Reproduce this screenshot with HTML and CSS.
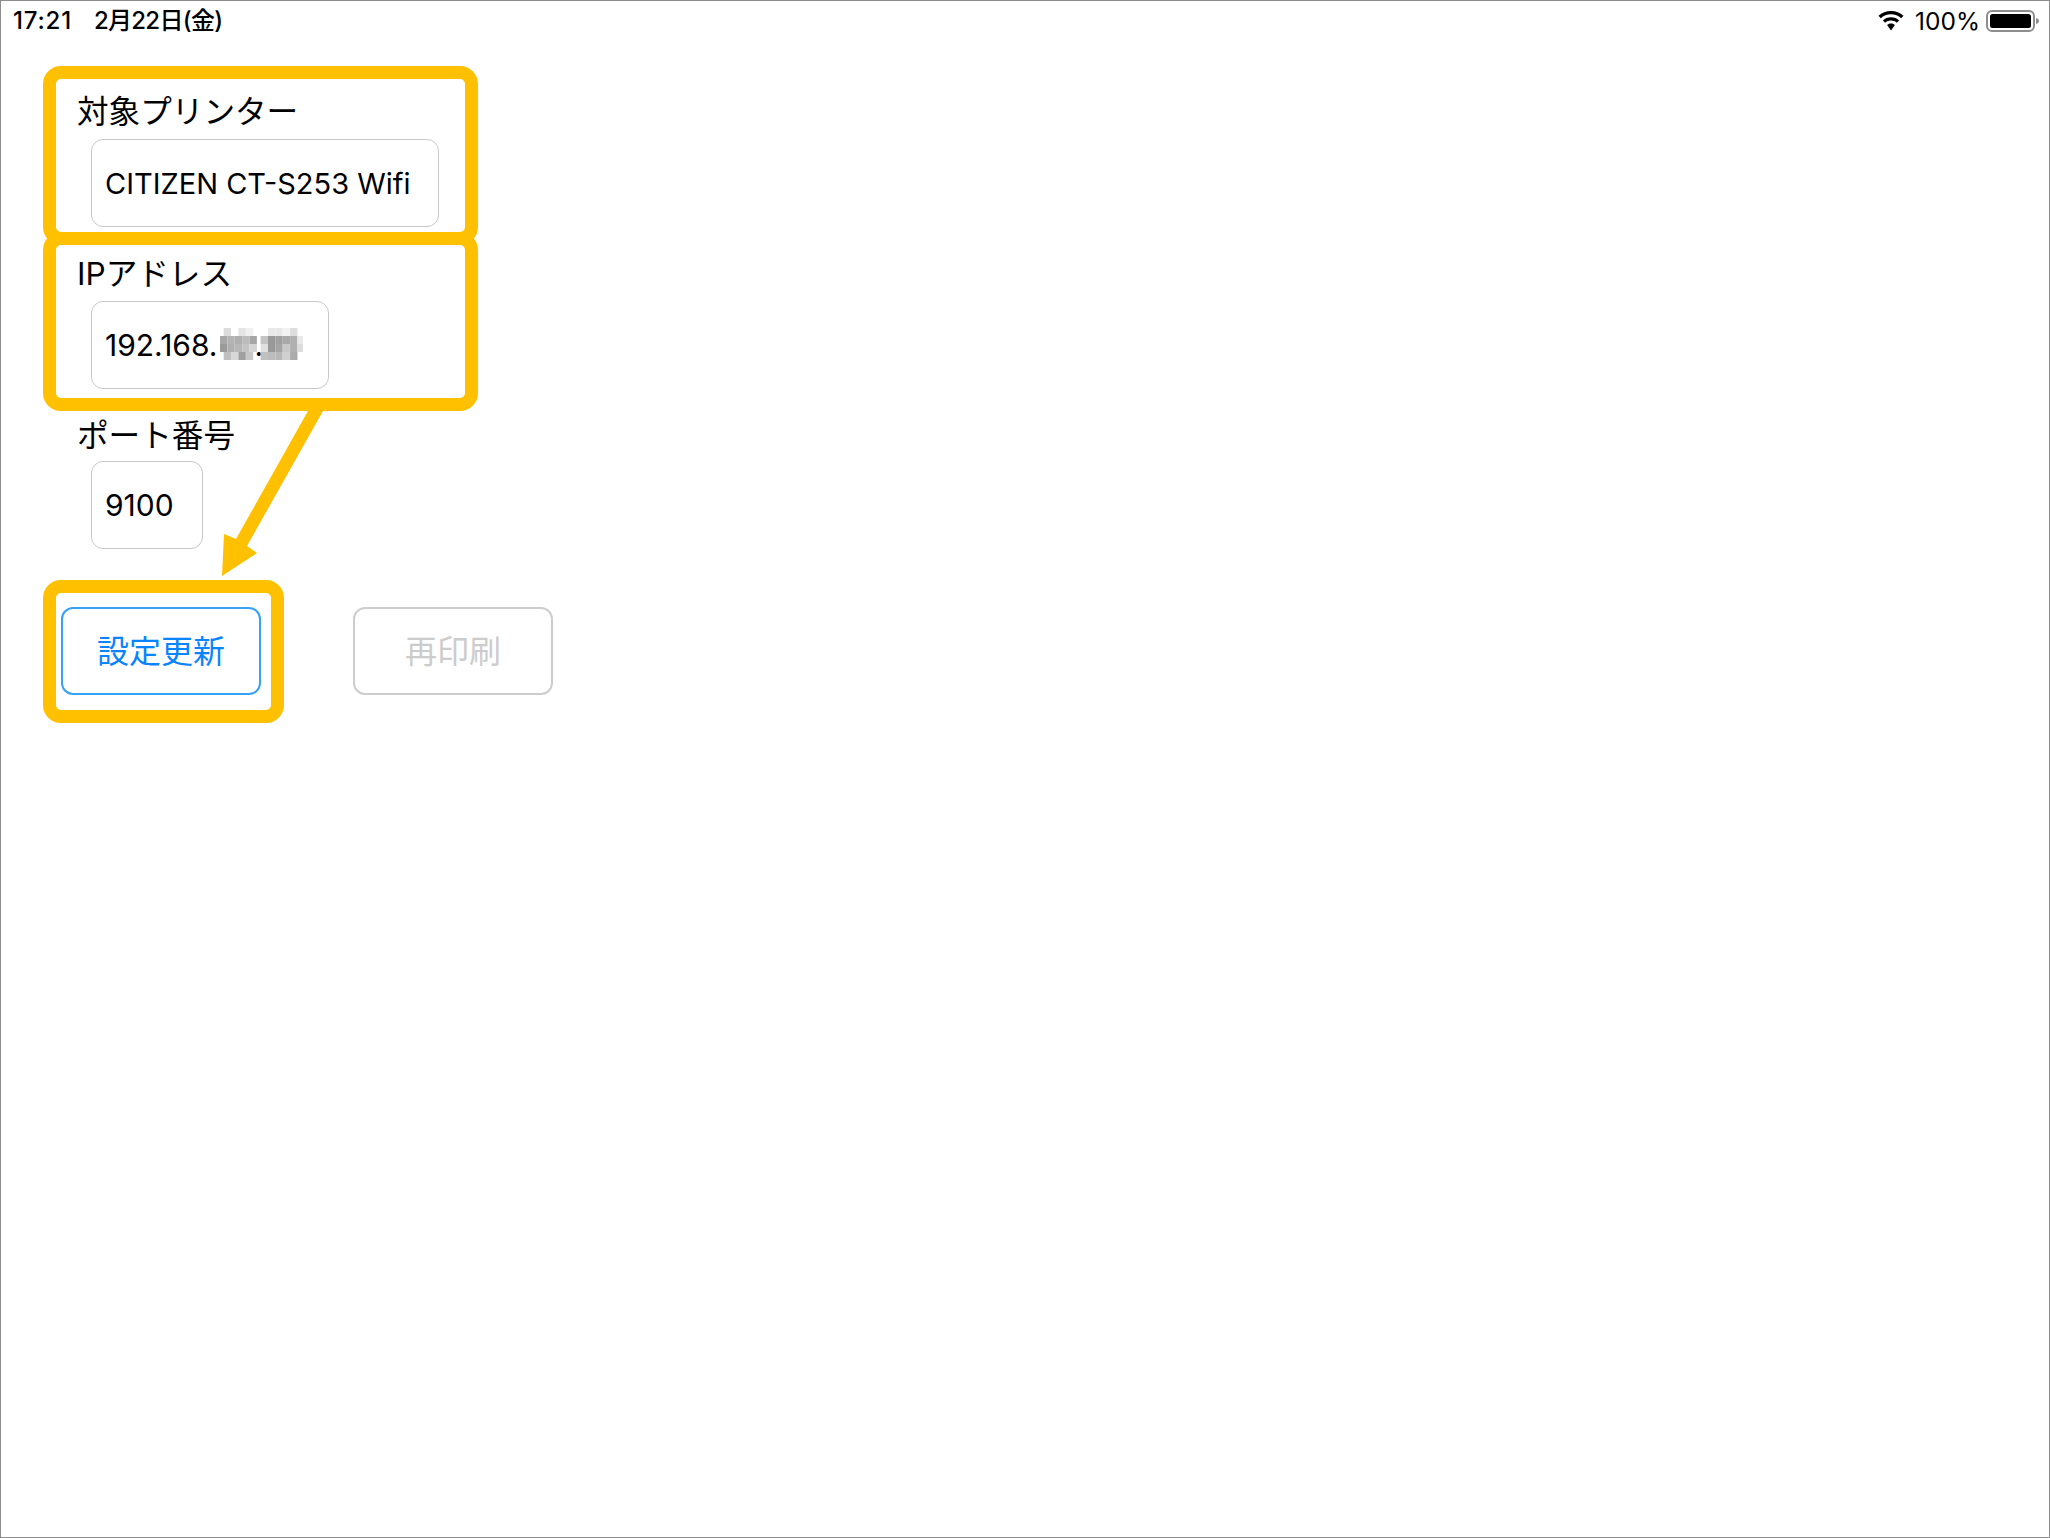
FILE: index.html
```html
<!DOCTYPE html>
<html lang="ja">
<head>
<meta charset="utf-8">
<title>プリンター設定</title>
<link rel="stylesheet" href="styles.css">
</head>
<body>
<div class="screen">
  <header class="status">
    <div class="status-left"><span class="time">17:21</span><span class="date">2月22日(金)</span></div>
    <div class="status-right">
      <svg class="wifi" width="28" height="20" viewBox="0 0 28 20"><path d="M14 3.2c3.900 0 7.500 1.500 10.200 4l2.300-2.400C23.200 1.800 18.800 0 14 0S4.800 1.800 1.500 4.800l2.300 2.400c2.700-2.500 6.300-4 10.200-4z"/><path d="M14 9.400c2.300 0 4.300.9 5.900 2.300l2.200-2.300C20 7.400 17.100 6.200 14 6.200S8 7.400 5.900 9.400l2.200 2.300c1.600-1.400 3.600-2.300 5.900-2.300z"/><path d="M14 12.500c-1.900 0-3 .7-3.900 1.500L14 19.500l3.900-5.500c-.9-.8-2-1.500-3.900-1.500z"/></svg>
      <span class="battery-pct">100%</span>
      <svg class="battery" width="54" height="22" viewBox="0 0 54 22"><rect class="battery-shell" x="1" y="1" width="47" height="20" rx="5"/><rect x="4" y="4" width="41" height="14" rx="2.500"/><path class="battery-cap" d="M50 8c1.800.4 3 1.500 3 3s-1.200 2.600-3 3z"/></svg>
    </div>
  </header>
  <main class="form">
    <section class="field field-printer">
      <label class="label">対象プリンター</label>
      <div class="input input-printer">CITIZEN CT-S253 Wifi</div>
    </section>
    <section class="field field-ip">
      <label class="label">IPアドレス</label>
      <div class="input input-ip">192.168.<span class="mask"></span>.<span class="mask"></span></div>
    </section>
    <section class="field field-port">
      <label class="label">ポート番号</label>
      <div class="input input-port">9100</div>
    </section>
    <div class="actions">
      <button class="btn btn-primary">設定更新</button>
      <button class="btn btn-disabled">再印刷</button>
    </div>
  </main>
  <svg class="mosaic" width="83" height="32" viewBox="0 0 90 32" preserveAspectRatio="none">
    <g fill="#dcdcdc"><rect x="4" width="8" height="8"/><rect x="52" width="8" height="8" fill="#e8e8e8"/></g>
    <rect x="20" width="8" height="8" fill="#e4e4e4"/><rect x="28" width="8" height="8" fill="#f0f0f0"/>
    <rect x="60" width="8" height="8" fill="#e8e8e8"/><rect x="68" width="8" height="8" fill="#f2f2f2"/><rect x="76" width="8" height="8" fill="#dedede"/>
    <rect y="8" width="8" height="8" fill="#a8a8a8"/><rect x="8" y="8" width="8" height="8" fill="#b4b4b4"/><rect x="16" y="8" width="8" height="8" fill="#b0b0b0"/><rect x="24" y="8" width="8" height="8" fill="#bcbcbc"/><rect x="32" y="8" width="8" height="8" fill="#a6a6a6"/>
    <rect x="44" y="8" width="8" height="8" fill="#c4c4c4"/><rect x="52" y="8" width="8" height="8" fill="#999"/><rect x="60" y="8" width="8" height="8" fill="#a0a0a0"/><rect x="68" y="8" width="8" height="8" fill="#a8a8a8"/><rect x="76" y="8" width="8" height="8" fill="#b0b0b0"/><rect x="84" y="8" width="6" height="8" fill="#e8e8e8"/>
    <rect y="16" width="8" height="8" fill="#9a9a9a"/><rect x="8" y="16" width="8" height="8" fill="#b0b0b0"/><rect x="16" y="16" width="8" height="8" fill="#b8b8b8"/><rect x="24" y="16" width="8" height="8" fill="#c4c4c4"/><rect x="32" y="16" width="8" height="8" fill="#d4d4d4"/>
    <rect x="44" y="16" width="8" height="8" fill="#e0e0e0"/><rect x="52" y="16" width="8" height="8" fill="#999"/><rect x="60" y="16" width="8" height="8" fill="#a4a4a4"/><rect x="68" y="16" width="8" height="8" fill="#c8c8c8"/><rect x="76" y="16" width="8" height="8" fill="#b0b0b0"/><rect x="84" y="16" width="6" height="8" fill="#dcdcdc"/>
    <rect x="4" y="24" width="8" height="8" fill="#c0c0c0"/><rect x="12" y="24" width="8" height="8" fill="#d8d8d8"/><rect x="20" y="24" width="8" height="8" fill="#a0a0a0"/><rect x="28" y="24" width="8" height="8" fill="#c8c8c8"/>
    <rect x="44" y="24" width="8" height="8" fill="#c0c0c0"/><rect x="52" y="24" width="8" height="8" fill="#bcbcbc"/><rect x="60" y="24" width="8" height="8" fill="#b8b8b8"/><rect x="68" y="24" width="8" height="8" fill="#d0d0d0"/><rect x="76" y="24" width="8" height="8" fill="#ababab"/>
  </svg>
  <div class="callout callout-printer"></div>
  <div class="callout callout-ip"></div>
  <div class="callout callout-update"></div>
  <svg class="arrow" width="120" height="180" viewBox="0 0 120 180"><polygon points="91,0 106,0 30,135 40,142 5,165 7,123 19,128"/></svg>
</div>
</body>
</html>
```
FILE: styles.css
```css
* { box-sizing: border-box; }
html, body { margin: 0; padding: 0; background: #fff; }
body { font-family: Inter, "Noto Sans CJK JP", sans-serif; color: #000; }
.screen { position: relative; width: 2050px; height: 1538px; border: 1px solid #8c8c8c; overflow: hidden; }

.status { display: flex; justify-content: space-between; align-items: center; height: 40px; padding: 0 9px 0 12px; font-size: 24px; }
.status-left { display: flex; align-items: baseline; gap: 22px; font-weight: 500; padding-bottom: 5px; }
.time { letter-spacing: 0.8px; }
.date { letter-spacing: -0.7px; }
.status-right { display: flex; align-items: center; }
.wifi { fill: #000; margin-right: 10px; }
.battery-pct { margin-right: 6px; font-size: 24.500px; }
.battery { fill: #000; }
.battery-shell { fill: none; stroke: #8e8e8e; stroke-width: 2; }
.battery-cap { fill: #8e8e8e; }

.form { display: flex; flex-direction: column; padding: 51px 0 0 76px; }
.field { display: flex; flex-direction: column; align-items: flex-start; }
.label { font-size: 31.600px; line-height: 40px; height: 40px; font-weight: 400; }
.input { margin: 7px 0 0 14px; height: 88px; border: 1px solid #c8c8c8; border-radius: 12px; display: flex; align-items: center; padding: 0 13px; font-size: 29px; white-space: pre; }
.input-printer { width: 348px; }
.input-ip { width: 238px; font-size: 30px; }
.input-port { width: 112px; margin-top: 5px; font-size: 30px; }
.field-ip { margin-top: 27px; }
.field-port { margin-top: 27px; }
.mask { display: inline-block; width: 37px; height: 1px; }

.actions { display: flex; gap: 92px; margin: 58px 0 0 -16px; }
.btn { width: 200px; height: 88px; border-radius: 12px; background: #fff; font: 32px/40px "Noto Sans CJK JP", sans-serif; padding: 0 0 5px; }
.btn-primary { border: 2px solid #35a2f5; color: #0a84ff; }
.btn-disabled { border: 2px solid #cdcdcd; color: #cccccc; }

.mosaic { position: absolute; left: 219px; top: 327px; }
.callout { position: absolute; border: 13px solid #ffc000; border-radius: 18px; background: transparent; }
.callout-printer { left: 42px; top: 65px; width: 435px; height: 179px; }
.callout-ip { left: 42px; top: 231px; width: 435px; height: 179px; }
.callout-update { left: 42px; top: 579px; width: 241px; height: 143px; }
.arrow { position: absolute; left: 216px; top: 410px; fill: #ffc000; }
```
